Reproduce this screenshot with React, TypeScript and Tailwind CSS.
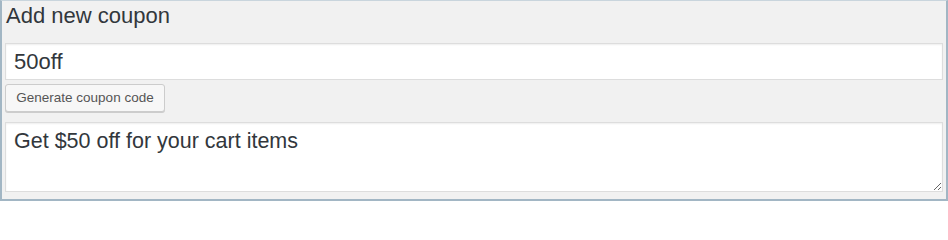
import React from "react";

export default function App() {
  return (
    <div className="box-border h-[201px] w-[948px] bg-[#f1f1f1] border-l-2 border-r-2 border-b-2 border-t border-l-[#a2b6c4] border-r-[#a2b6c4] border-b-[#a2b6c4] border-t-[#c9d5dd] px-[3px] pt-[2px] text-[#32373c] font-['Liberation_Sans',Arial,sans-serif]">
      <div className="flex h-[26px] items-center text-[22px] leading-[26px] pl-[1px] mb-[14px]">
        Add new coupon
      </div>
      <input
        type="text"
        defaultValue="50off"
        className="box-border block h-[37px] w-full border border-[#dddddd] bg-white px-[8px] text-[22px] text-[#32373c] font-['Liberation_Sans',Arial,sans-serif] shadow-[inset_0_1px_2px_rgba(0,0,0,0.07)] outline-none"
      />
      <button
        type="button"
        className="mt-[4px] box-border block h-[28px] w-[160px] rounded-[3px] border border-[#cccccc] bg-[#f7f7f7] text-center text-[13.5px] text-[#555555] font-['Liberation_Sans',Arial,sans-serif] shadow-[0_1px_0_#cccccc]"
      >
        Generate coupon code
      </button>
      <textarea
        defaultValue="Get $50 off for your cart items"
        className="mt-[10px] box-border block h-[70px] w-full border border-[#dddddd] bg-white px-[8px] pt-[2px] text-[21.5px] leading-[1.5] text-[#32373c] font-['Liberation_Sans',Arial,sans-serif] shadow-[inset_0_1px_2px_rgba(0,0,0,0.07)] outline-none"
      />
    </div>
  );
}
